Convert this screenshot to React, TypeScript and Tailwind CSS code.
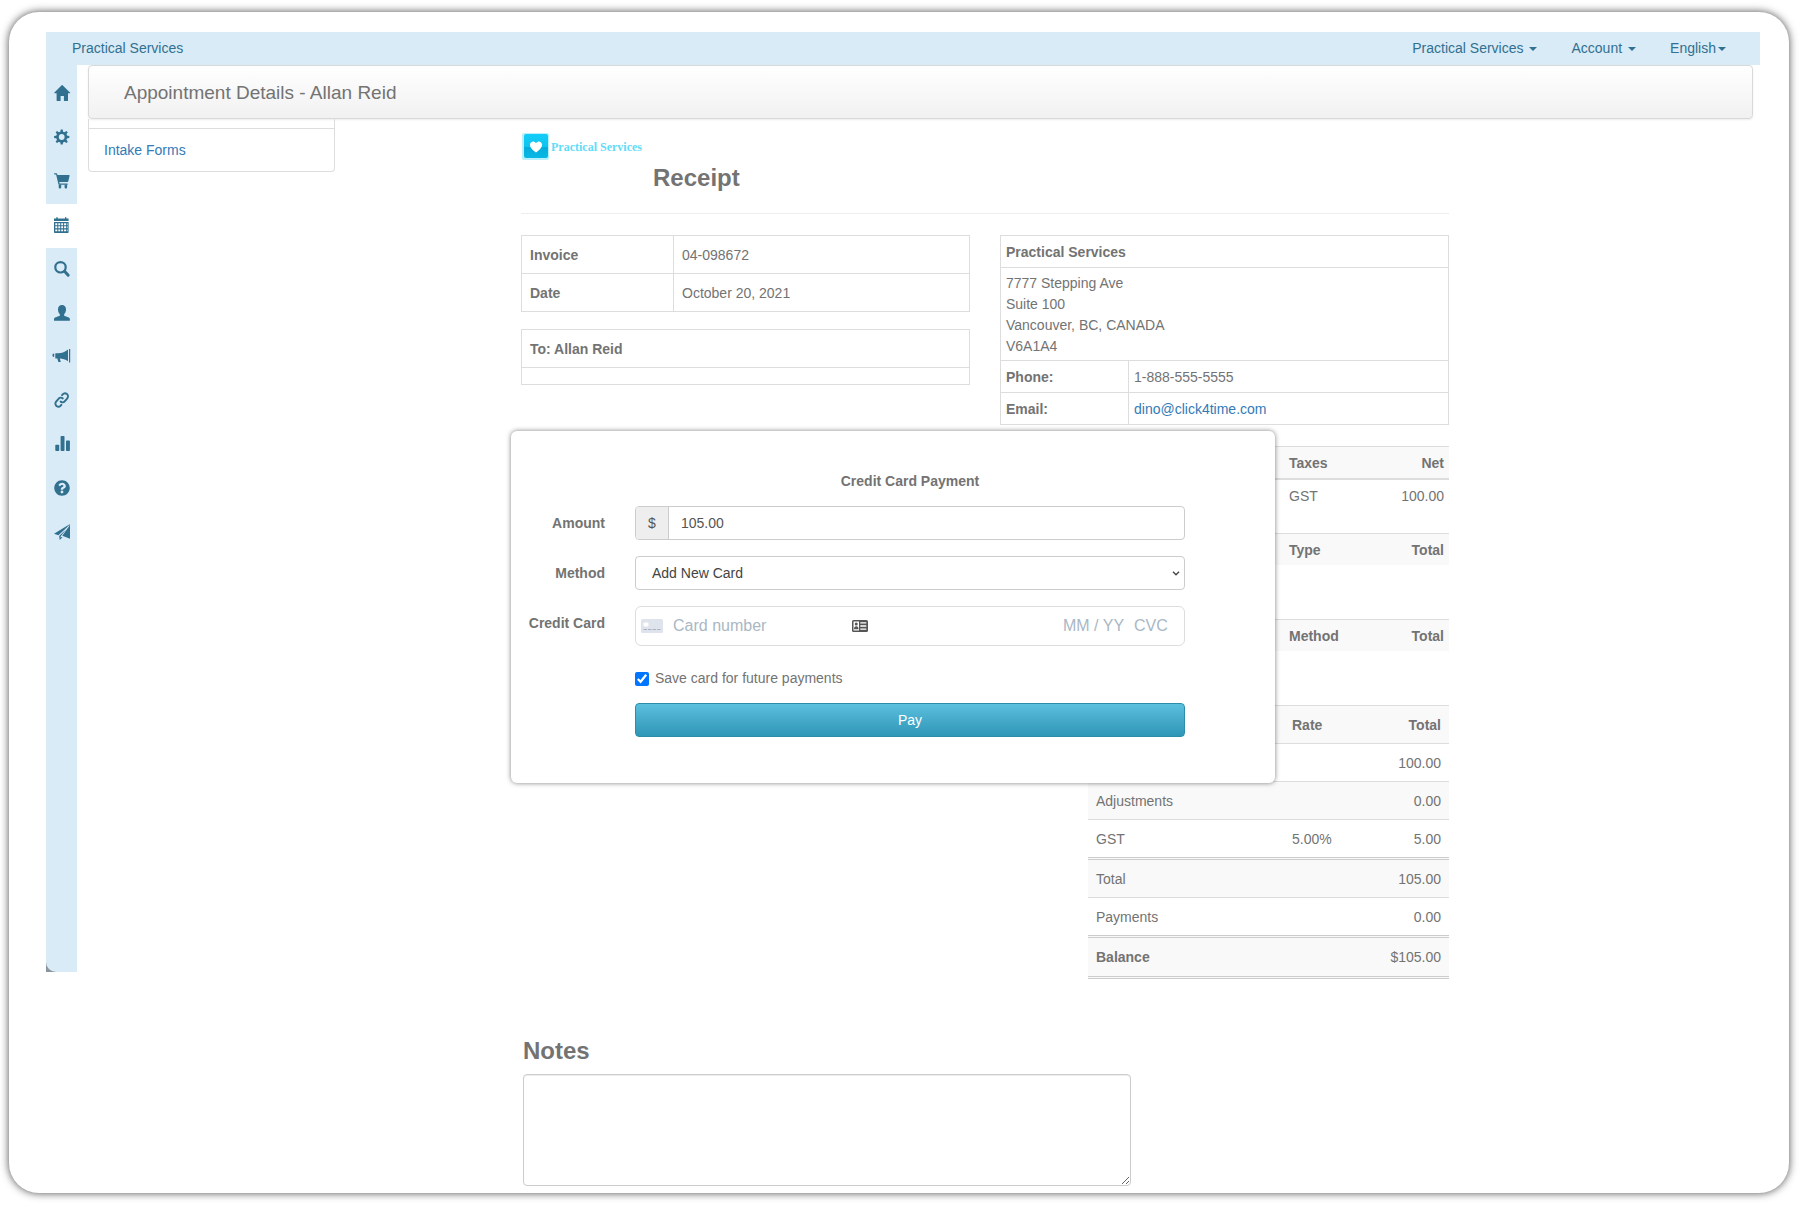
import type { ReactNode } from 'react';
import { FaQuestionCircle } from 'react-icons/fa';

function Glyph({ children }: { children: ReactNode }) {
  return (
    <svg viewBox="0 0 16 16" className="size-4 overflow-visible" fill="currentColor" aria-hidden="true">
      {children}
    </svg>
  );
}

const teeth = [0, 45, 90, 135, 180, 225, 270, 315];

const navItems = [
  {
    label: 'Home',
    icon: (
      <Glyph>
        <path d="M8.3 0 16.2 7.8q.3.4-.2.4H14V15.5q0 .4-.4.4H10.300q-.4 0-.4-.4V11.100H6.600V15.500q0 .4-.4.4H3q-.4 0-.4-.4V8.200H.4q-.5 0-.2-.4L7.700.2q.3-.3.6-.2z" />
      </Glyph>
    ),
  },
  {
    label: 'Settings',
    icon: (
      <Glyph>
        <circle cx="7.700" cy="8" r="4.200" fill="none" stroke="currentColor" strokeWidth="2.600" />
        {teeth.map((angle) => (
          <path key={angle} d="M6.200 3.400 6.700.4H8.700L9.200 3.400z" transform={`rotate(${angle} 7.700 8)`} />
        ))}
      </Glyph>
    ),
  },
  {
    label: 'Cart',
    icon: (
      <Glyph>
        <path d="M.6.200H2.400q.5 0 .7.500L3.500 2H15q.8 0 .6.800L14.300 8.300q-.2.700-.9.700H5.200L5.700 10.600H13.200q.6 0 .6.600t-.6.600H5q-.5 0-.6-.5L2.100 1.400H.6Q0 1.400 0 .8T.6.200z" />
        <rect x="4.700" y="11.500" width="2.500" height="4" rx="1" />
        <rect x="10.600" y="11.500" width="2.500" height="4" rx="1" />
      </Glyph>
    ),
  },
  {
    label: 'Calendar',
    active: true,
    icon: (
      <Glyph>
        <path d="M0 1.400H2.300V.700Q2.300 0 3 0t.7.700v.7H11V.700Q11 0 11.700 0t.7.700v.7H14.600V4H0z" />
        <path
          fillRule="evenodd"
          d="M0 5H14.600V15.200q0 .7-.7.700H.7Q0 15.900 0 15.200zM1.300 6.300V8.200H3.300V6.300zM4.300 6.300V8.200H6.200V6.300zM7.200 6.300V8.200H9.100V6.300zM10.100 6.300V8.200H12V6.300zM1.300 9.300V11.200H3.300V9.300zM4.300 9.300V11.200H6.200V9.300zM7.200 9.300V11.200H9.100V9.300zM10.100 9.300V11.200H12V9.300zM1.300 12.400V14.300H3.300V12.400zM4.300 12.400V14.300H6.200V12.400zM7.200 12.400V14.300H9.100V12.400zM10.100 12.400V14.300H12V12.400zM12.800 6.300V8.200H13.500V6.300zM12.800 9.300V11.200H13.500V9.300zM12.800 12.400V14.300H13.500V12.400z"
        />
      </Glyph>
    ),
  },
  {
    label: 'Search',
    icon: (
      <Glyph>
        <circle cx="6.500" cy="6.300" r="5.200" fill="none" stroke="currentColor" strokeWidth="2.200" />
        <path d="m10.500 10.300 3.700 3.900" fill="none" stroke="currentColor" strokeWidth="3" strokeLinecap="round" />
      </Glyph>
    ),
  },
  {
    label: 'Clients',
    icon: (
      <Glyph>
        <path d="M8 0C10.500 0 12 1.900 12 4.200 12 6.400 11.400 8 10.200 9.100V10.800C11 11.500 15.900 12.200 15.900 14V15.200q0 .6-.6.600H.6q-.6 0-.6-.6V14C0 12.200 5 11.500 5.800 10.800V9.100C4.600 8 4 6.400 4 4.200 4 1.900 5.500 0 8 0z" />
      </Glyph>
    ),
  },
  {
    label: 'Promotions',
    icon: (
      <Glyph>
        <path d="M15 1h1.200V14.400H15zM14 1.600V13.200C11.500 11.400 8.500 10.700 5.800 10.500L6.700 13.600q.1.500-.4.500H4.800q-.5 0-.6-.5L3.300 10.400H1.800Q1.300 10.400 1.300 9.900V5.800Q1.300 5.300 1.800 5.300H4C8 5.200 11.500 4 14 1.600zM-.2 5.600H.2V9H-.2Q-1.600 8.700-1.600 7.300T-.2 5.600z" />
      </Glyph>
    ),
  },
  {
    label: 'Links',
    icon: (
      <Glyph>
        <g transform="translate(7.700 8) rotate(-50)" fill="none" stroke="currentColor" strokeWidth="1.900" strokeLinecap="round">
          <path d="M-1.900.2C-1.700 1.700-.8 3.200.8 3.200H4.900A3 3 0 0 0 4.900-2.800H3.900" />
          <path d="M1.900-.2C1.700-1.700.8-3.200-.8-3.200H-4.900A3 3 0 0 0-4.900 2.800H-3.900" />
        </g>
      </Glyph>
    ),
  },
  {
    label: 'Reports',
    icon: (
      <Glyph>
        <rect x="1.300" y="8.800" width="3.900" height="6.200" rx=".8" />
        <rect x="6.600" y="0" width="3.900" height="15" rx=".8" />
        <rect x="12" y="4.500" width="3.900" height="10.500" rx=".8" />
      </Glyph>
    ),
  },
  { label: 'Help', icon: <FaQuestionCircle className="size-4" /> },
  {
    label: 'Send',
    icon: (
      <Glyph>
        <path d="M16 0 0 9.700 4.400 11.200 12.800 3.500zM16 0V14.700L8.300 11.800 14.700 2.800zM5.200 11.900 12.200 5.300 6.700 12.300V13.800L7.700 12.900 8.500 13.200 5.700 16z" />
      </Glyph>
    ),
  },
];

function Caret() {
  return (
    <svg viewBox="0 0 8 4" className="h-1 w-2" fill="currentColor" aria-hidden="true">
      <path d="M0 0h8L4 4z" />
    </svg>
  );
}

function Logo() {
  return (
    <div className="flex items-center">
      <svg viewBox="0 0 29 29" className="size-[29px]" aria-hidden="true">
        <defs>
          <linearGradient id="logo-fill" x1="0" y1="0" x2="0" y2="1">
            <stop offset="0" stopColor="#12cdf8" />
            <stop offset=".55" stopColor="#10c3ee" />
            <stop offset=".56" stopColor="#04addb" />
            <stop offset="1" stopColor="#08b8e6" />
          </linearGradient>
        </defs>
        <rect x="1" y="1" width="27" height="27" rx="2" fill="#b9f0fd" />
        <rect x="3" y="2" width="24" height="24" rx="2" fill="url(#logo-fill)" />
        <path d="M15 20.500C10 17 8.700 14.500 9 12.300 9.400 9.200 13.300 8.300 15 11.200 16.700 8.300 20.600 9.200 21 12.300 21.300 14.500 20 17 15 20.500z" fill="#fff" />
      </svg>
      <span className="ml-px font-['Liberation_Serif',serif] text-xs font-bold text-[#5fdcf8]">Practical Services</span>
    </div>
  );
}

function SideNav() {
  return (
    <nav className="h-[907px] w-[31px] shrink-0 bg-[#8b959b]">
      <div className="h-full rounded-bl-[10px] bg-[#d9ebf7] pt-[7px]">
        <div className="flex h-[483px] flex-col">
          {navItems.map((item) => (
            <a
              key={item.label}
              href="#"
              aria-label={item.label}
              className={item.active ? 'flex flex-1 justify-center bg-white pt-[13px]' : 'flex flex-1 justify-center pt-[13px]'}
            >
              {item.icon}
            </a>
          ))}
        </div>
      </div>
    </nav>
  );
}

function InvoiceTables() {
  const cell = 'border border-[#ddd] px-2 pt-[9px] pb-[7px]';

  return (
    <div>
      <table className="w-full border-collapse text-left">
        <tbody>
          <tr>
            <th className={`${cell} w-[152px]`}>Invoice</th>
            <td className={cell}>04-098672</td>
          </tr>
          <tr>
            <th className={cell}>Date</th>
            <td className={cell}>October 20, 2021</td>
          </tr>
        </tbody>
      </table>
      <table className="mt-[17px] w-full border-collapse text-left">
        <tbody>
          <tr>
            <th className={cell}>To: Allan Reid</th>
          </tr>
          <tr>
            <td className="h-[17px] border border-[#ddd] p-0" />
          </tr>
        </tbody>
      </table>
    </div>
  );
}

function BusinessTable() {
  const cell = 'border border-[#ddd] px-[5px] pt-1.5 pb-1';

  return (
    <table className="w-full border-collapse self-start text-left">
      <tbody>
        <tr>
          <th colSpan={2} className={cell}>Practical Services</th>
        </tr>
        <tr>
          <td colSpan={2} className="border border-[#ddd] px-[5px] pt-[5px] pb-[3px]">
            7777 Stepping Ave<br />
            Suite 100<br />
            Vancouver, BC, CANADA<br />
            V6A1A4
          </td>
        </tr>
        <tr>
          <th className={`${cell} w-32`}>Phone:</th>
          <td className={cell}>1-888-555-5555</td>
        </tr>
        <tr>
          <th className={cell}>Email:</th>
          <td className={cell}>
            <a href="mailto:dino@click4time.com" className="text-[#337ab7]">dino@click4time.com</a>
          </td>
        </tr>
      </tbody>
    </table>
  );
}

function LineTable({ heads, cells }: { heads: [string, string]; cells?: [string, string] }) {
  const head = 'border-t border-[#ddd] px-[5px] pt-1.5 pb-1';
  const cell = 'border-t-2 border-[#ddd] px-[5px] pt-1.5 pb-1';

  return (
    <table className="w-full table-fixed border-separate border-spacing-0">
      <thead className="bg-[#f9f9f9]">
        <tr>
          <td className={head} />
          <th className={`${head} w-[85px] text-left`}>{heads[0]}</th>
          <th className={`${head} w-20 text-right`}>{heads[1]}</th>
        </tr>
      </thead>
      {cells && (
        <tbody>
          <tr>
            <td className={cell} />
            <td className={cell}>{cells[0]}</td>
            <td className={`${cell} text-right`}>{cells[1]}</td>
          </tr>
        </tbody>
      )}
    </table>
  );
}

function TotalsTable() {
  const cell = 'border-t border-[#ddd] px-2 pt-[9px] pb-[7px]';
  const ruled = 'border-t-3 border-double border-[#ccc] px-2 pt-[9px] pb-[7px]';
  const last = 'border-y-3 border-double border-[#ccc] px-2 pt-[9px] pb-2';

  return (
    <table className="ml-auto w-[361px] border-separate border-spacing-0">
      <thead className="bg-[#f9f9f9]">
        <tr>
          <td className={`${cell} w-[196px]`} />
          <th className={`${cell} text-left`}>Rate</th>
          <th className={`${cell} text-right`}>Total</th>
        </tr>
      </thead>
      <tbody>
        <tr>
          <td className={cell} />
          <td className={cell} />
          <td className={`${cell} text-right`}>100.00</td>
        </tr>
        <tr className="bg-[#f9f9f9]">
          <td className={cell}>Adjustments</td>
          <td className={cell} />
          <td className={`${cell} text-right`}>0.00</td>
        </tr>
        <tr>
          <td className={cell}>GST</td>
          <td className={cell}>5.00%</td>
          <td className={`${cell} text-right`}>5.00</td>
        </tr>
        <tr className="bg-[#f9f9f9]">
          <td className={ruled}>Total</td>
          <td className={ruled} />
          <td className={`${ruled} text-right`}>105.00</td>
        </tr>
        <tr>
          <td className={cell}>Payments</td>
          <td className={cell} />
          <td className={`${cell} text-right`}>0.00</td>
        </tr>
        <tr className="bg-[#f9f9f9]">
          <th className={`${last} text-left`}>Balance</th>
          <td className={last} />
          <td className={`${last} text-right`}>$105.00</td>
        </tr>
      </tbody>
    </table>
  );
}

function PaymentDialog() {
  return (
    <form
      role="dialog"
      aria-labelledby="payment-title"
      className="absolute -left-[10px] top-[312px] w-[764px] rounded-md bg-white pt-10 pr-[90px] pb-[46px] shadow-[0_0_5px_rgba(0,0,0,0.5)]"
    >
      <div className="grid grid-cols-[94px_1fr] gap-x-[30px] gap-y-4">
        <h4 id="payment-title" className="col-start-2 -mb-0.5 text-center font-bold">Credit Card Payment</h4>

        <label htmlFor="amount" className="text-right font-bold leading-[34px]">Amount</label>
        <div className="flex h-[34px] overflow-hidden rounded border border-[#ccc] text-[#555]">
          <span className="flex w-[33px] items-center justify-center border-r border-[#ccc] bg-[#eee]">$</span>
          <input id="amount" type="text" defaultValue="105.00" className="min-w-0 flex-1 px-3 outline-none" />
        </div>

        <label htmlFor="method" className="text-right font-bold leading-[34px]">Method</label>
        <div className="relative">
          <select id="method" className="h-[34px] w-full appearance-none rounded border border-[#ccc] bg-white px-4 text-[#444]">
            <option>Add New Card</option>
          </select>
          <svg viewBox="0 0 8 5" className="pointer-events-none absolute top-[15px] right-[5px] h-[5px] w-2" aria-hidden="true">
            <path d="M1 .700 4 3.800 7 .700" fill="none" stroke="#444" strokeWidth="1.300" />
          </svg>
        </div>

        <label htmlFor="card" className="text-right font-bold leading-[34px]">Credit Card</label>
        <div className="flex h-10 items-center rounded-md border border-[#ddd] pl-[5px] text-base">
          <svg viewBox="0 0 22 14" className="h-[14px] w-[22px] shrink-0" aria-hidden="true">
            <rect width="22" height="14" rx="1.500" fill="#dfe3eb" />
            <rect x="2.500" y="3.500" width="5" height="4" rx="1" fill="#fff" />
            <path d="M2.500 10.500h17" stroke="#aab2c4" strokeWidth="1.200" strokeDasharray="3.500 1" />
          </svg>
          <input id="card" type="text" placeholder="Card number" className="ml-[10px] w-[179px] outline-none placeholder:text-[#aab7c4]" />
          <svg viewBox="0 0 16 12" className="h-3 w-4 shrink-0" aria-hidden="true">
            <rect width="16" height="12" rx="1.500" fill="#555" />
            <rect x="1.500" y="1.500" width="5.500" height="9" fill="#fff" />
            <circle cx="4.250" cy="4" r="1.500" fill="#555" />
            <path d="M2 9.200q0-3 2.250-3t2.250 3z" fill="#555" />
            <path d="M8.300 2.800h6M8.300 6h6M8.300 9.200h6" stroke="#fff" strokeWidth="1.300" />
          </svg>
          <input type="text" aria-label="Expiry" placeholder="MM / YY" className="ml-auto w-[66px] outline-none placeholder:text-[#aab7c4]" />
          <input type="text" aria-label="CVC" placeholder="CVC" className="ml-[5px] w-[50px] outline-none placeholder:text-[#aab7c4]" />
        </div>

        <label className="col-start-2 mt-1.5 -mb-0.5 flex items-center gap-1.5">
          <input type="checkbox" defaultChecked className="size-[14px] accent-[#0075ff]" />
          Save card for future payments
        </label>

        <button
          type="button"
          className="col-start-2 h-[34px] rounded border border-[#2d8eac] bg-gradient-to-b from-[#5bc0de] to-[#2f96b7] text-white"
        >
          Pay
        </button>
      </div>
    </form>
  );
}

export default function App() {
  return (
    <div className="flow-root bg-white font-['Liberation_Sans',Arial,sans-serif] text-sm leading-[21px] text-[#737373]">
      <div className="mt-3 mr-[17px] mb-3 ml-[9px] rounded-[30px] bg-white pt-5 pr-[29px] pb-[7px] pl-[37px] shadow-[0_0_9px_rgba(0,0,0,0.7)]">
        <header className="flex h-[33px] items-center bg-[#d9ebf7] pr-[34px] pl-[26px] text-[#31708f]">
          <a href="#">Practical Services</a>
          <nav className="ml-auto flex gap-[34px]">
            <button type="button" className="flex items-center gap-1.5">Practical Services <Caret /></button>
            <button type="button" className="flex items-center gap-1.5">Account <Caret /></button>
            <button type="button" className="flex items-center gap-0.5">English <Caret /></button>
          </nav>
        </header>

        <div className="flex">
          <div className="shrink-0 text-[#31708f]">
            <SideNav />
          </div>

          <div className="mr-[7px] ml-[11px] flex-1">
            <div className="flex h-[54px] items-center rounded border border-[#d9d9d9] bg-gradient-to-b from-white to-[#f1f1f1] pl-[35px] shadow-[0_1px_2px_rgba(0,0,0,0.08)]">
              <h1 className="text-[19px]">Appointment Details - Allan Reid</h1>
            </div>

            <div className="flex items-start">
              <aside className="w-[247px] shrink-0 rounded-b border-x border-b border-[#ddd] pt-[9px]">
                <a href="#" className="block border-t border-[#ddd] px-[15px] pt-[11px] pb-[10px] text-[#337ab7]">Intake Forms</a>
              </aside>

              <main className="relative mr-[304px] ml-[186px] flex-1 pt-[13px]">
                <Logo />
                <h2 className="mt-1 pl-[132px] text-2xl leading-[26px] font-bold">Receipt</h2>
                <hr className="mt-[22px] border-[#eee]" />

                <div className="mt-[21px] grid grid-cols-2 gap-[30px]">
                  <InvoiceTables />
                  <BusinessTable />
                </div>

                <div className="mt-[21px]">
                  <LineTable heads={['Taxes', 'Net']} cells={['GST', '100.00']} />
                </div>
                <div className="mt-[22px]">
                  <LineTable heads={['Type', 'Total']} />
                </div>
                <div className="mt-[54px]">
                  <LineTable heads={['Method', 'Total']} />
                </div>
                <div className="mt-[54px]">
                  <TotalsTable />
                </div>

                <div className="mt-[59px] ml-0.5">
                  <label htmlFor="notes" className="block text-2xl leading-[26px] font-bold">Notes</label>
                  <textarea
                    id="notes"
                    className="mt-[10px] block h-28 w-[608px] rounded border border-[#ccc] p-2 shadow-[inset_0_1px_1px_rgba(0,0,0,0.075)] outline-none"
                  />
                </div>

                <PaymentDialog />
              </main>
            </div>
          </div>
        </div>
      </div>
    </div>
  );
}
